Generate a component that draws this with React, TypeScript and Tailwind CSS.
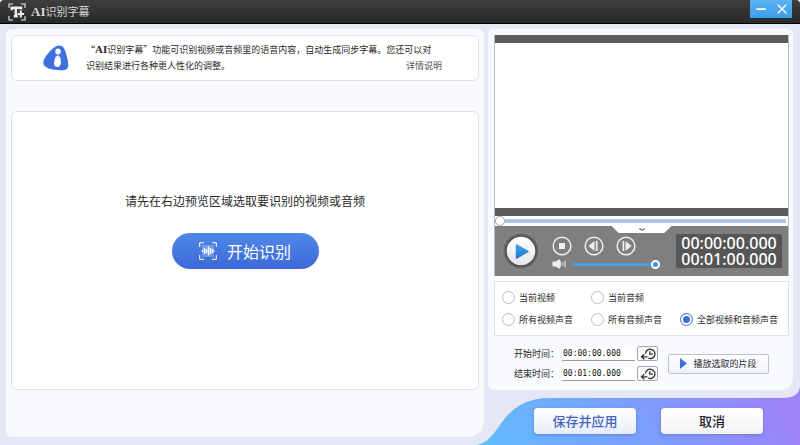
import React, { useState } from 'react';
import { ChevronDown, Minus, X } from 'lucide-react';

const sources = [
  { id: 'current-video', label: '当前视频' },
  { id: 'current-audio', label: '当前音频' },
  { id: 'all-video', label: '所有视频声音' },
  { id: 'all-audio', label: '所有音频声音' },
  { id: 'everything', label: '全部视频和音频声音' },
];

const LogoIcon = () => (
  <svg viewBox="0 0 18 18" className="h-[18px] w-[18px]" fill="none" stroke="#ececec" aria-hidden="true">
    <path d="M1 5V1h4M13 1h4v4M17 13v4h-4M5 17H1v-4" strokeWidth="1.1" />
    <path d="M3.800 7.200V4.800h9.200v1.600M7.800 4.500v9M5.800 13.300h4" strokeWidth="2.500" />
    <path d="M12.800 7.600v7M9.800 11h6.200" stroke="#333" strokeWidth="4" />
    <path d="M12.800 7.600v6.800M9.500 11h6.600" strokeWidth="2" />
  </svg>
);

const InfoIcon = () => (
  <svg viewBox="0 0 26 26" className="h-[26px] w-[26px] shrink-0" aria-hidden="true">
    <path d="M15.500.500C18.500.300 20.500 1.800 21.600 4.500C23.500 9 25.500 16.500 25.300 20.500C25.100 24 22.500 25.300 18.500 25.300C12.500 25.300 6.500 24.200 2.800 22C-.2 20-.3 16.500 1.500 13.500C4 9.300 10.500 1 15.500.500Z" fill="#3f71dc" />
    <ellipse cx="15" cy="6.500" rx="2.700" ry="3" fill="#fff" />
    <path d="M14.200 10.600C16.600 10.300 17.700 12.500 17.800 15.500C18 19 17.600 21.800 14.600 21.900C11.300 22 10.700 19.800 11.300 16.600C11.900 13.500 12.300 10.900 14.200 10.600Z" fill="#fff" />
  </svg>
);

const WaveIcon = () => (
  <svg viewBox="0 0 18 18" className="h-[18px] w-[18px]" fill="none" stroke="#fff" aria-hidden="true">
    <path d="M.7 5V.7H5M13 .7h4.300V5M17.300 13v4.300H13M5 17.300H.7V13" strokeWidth="1" />
    <rect x="3" y="3" width="12" height="12" fill="#fff" fillOpacity=".25" stroke="none" />
    <path d="M3.500 8v2M5.500 6v6M7.500 7v4M9.500 4.500v9M11.500 6v6M13.500 7v4M15 8.500v1" strokeWidth="1.400" />
  </svg>
);

const SpeakerIcon = () => (
  <svg viewBox="0 0 16 12" className="h-3 w-4 shrink-0" aria-hidden="true">
    <path d="M.5 3.500h3L8 1v10L3.500 8.500h-3Z" fill="#ececec" />
    <path d="M9.500 5.500L14 2v8L9.500 6.500Z" fill="#b5b5b5" />
    <path d="M8.500 3v6" stroke="#ececec" />
  </svg>
);

const ResetIcon = () => (
  <svg viewBox="0 0 16 12" className="h-3 w-4" fill="none" stroke="#333" strokeWidth="1.300" aria-hidden="true">
    <path d="M5.500 5.500A4.700 4.700 0 1 1 8.300 10.200" />
    <path d="M9.800 3.200v3h3" />
    <path d="M7.500 8.800H2M4.300 6.300L1.500 8.800l2.800 2.500" />
  </svg>
);

type RoundButtonProps = { label: string; children: React.ReactNode };

const RoundButton = ({ label, children }: RoundButtonProps) => (
  <button aria-label={label} className="h-5 w-5 text-[#f0f0f0] hover:text-white">
    <svg viewBox="0 0 20 20" fill="currentColor" aria-hidden="true">
      <circle cx="10" cy="10" r="8.800" fill="none" stroke="currentColor" strokeWidth="1.500" />
      {children}
    </svg>
  </button>
);

const TitleBar = () => (
  <header className="flex h-6 items-start justify-between rounded-t-sm border-b border-black bg-linear-to-b from-[#3e3e3e] to-[#292929] pr-2 pl-2">
    <div className="flex items-center gap-[5px] pt-[3px]">
      <LogoIcon />
      <h1 className="font-['Liberation_Serif','Noto_Sans_CJK_SC',serif] text-[13px] leading-4 font-bold text-[#d8d8d8]">
        AI<span className="text-[11px] font-normal">识别字幕</span>
      </h1>
    </div>
    <div className="flex h-[18px] items-center bg-linear-to-b from-[#5ab2f2] to-[#3c9eea] text-white">
      <button aria-label="最小化" className="flex h-full w-[21px] items-center justify-center">
        <Minus className="h-3.5 w-3.5" strokeWidth={3} />
      </button>
      <button aria-label="关闭" className="flex h-full w-[21px] items-center justify-center">
        <X className="h-4 w-4" />
      </button>
    </div>
  </header>
);

const Player = () => {
  const [position, setPosition] = useState(0);
  const [volume, setVolume] = useState(100);

  return (
    <section aria-label="预览" className="border-x border-[#b9bbc0] bg-white">
      <div className="h-[181px] border-y-8 border-[#5c5c5c] bg-white" />
      <div className="flex h-[10px] items-center pr-0.5">
        <input
          type="range"
          aria-label="播放进度"
          value={position}
          onChange={(e) => setPosition(Number(e.target.value))}
          className="h-1 w-full appearance-none bg-[#afc4e3] [&::-webkit-slider-thumb]:h-[10px] [&::-webkit-slider-thumb]:w-[10px] [&::-webkit-slider-thumb]:appearance-none [&::-webkit-slider-thumb]:rounded-full [&::-webkit-slider-thumb]:border [&::-webkit-slider-thumb]:border-[#a8a8a8] [&::-webkit-slider-thumb]:bg-white"
        />
      </div>
      <div className="relative flex h-[50px] items-center gap-3 bg-[#7f7f7f] pr-1.5 pl-[7px]">
        <button aria-label="展开" className="absolute top-0 left-1/2 h-[7px] w-[60px] -translate-x-1/2 bg-white text-[#666] [clip-path:polygon(0_0,100%_0,88%_100%,12%_100%)]">
          <ChevronDown className="mx-auto h-[7px] w-2.5" strokeWidth={3} preserveAspectRatio="none" />
        </button>
        <button aria-label="播放" className="h-[38px] w-[38px] shrink-0">
          <svg viewBox="0 0 38 38" aria-hidden="true">
            <defs>
              <linearGradient id="play-face" x1="0" y1="0" x2="0" y2="1">
                <stop offset="0" stopColor="#fff" />
                <stop offset="1" stopColor="#e3e5e8" />
              </linearGradient>
              <linearGradient id="play-arrow" x1="0" y1="0" x2="0" y2="1">
                <stop offset="0" stopColor="#3fa3ea" />
                <stop offset="1" stopColor="#1f78cf" />
              </linearGradient>
            </defs>
            <circle cx="19" cy="19" r="18.300" fill="#686868" stroke="#8e8e8e" />
            <circle cx="19" cy="19" r="15.800" fill="#4f4f4f" />
            <circle cx="19" cy="19" r="14.300" fill="url(#play-face)" />
            <path d="M14.500 13v13L26 19.500Z" fill="url(#play-arrow)" stroke="url(#play-arrow)" strokeWidth="1.500" strokeLinejoin="round" />
          </svg>
        </button>
        <div className="flex min-w-0 flex-1 flex-col gap-0.5 pt-1">
          <div className="flex gap-3">
            <RoundButton label="停止">
              <rect x="7" y="7" width="6" height="6" />
            </RoundButton>
            <RoundButton label="上一帧">
              <path d="M4.500 10L10.500 5v10ZM11.800 5h1.700v10h-1.700Z" />
            </RoundButton>
            <RoundButton label="下一帧">
              <path d="M15.500 10L9.500 5v10ZM6.500 5h1.700v10H6.500Z" />
            </RoundButton>
          </div>
          <div className="flex items-center gap-1">
            <SpeakerIcon />
            <input
              type="range"
              aria-label="音量"
              value={volume}
              onChange={(e) => setVolume(Number(e.target.value))}
              className="h-[3px] w-[88px] appearance-none rounded bg-[#4a9fe2] [&::-webkit-slider-thumb]:h-[9px] [&::-webkit-slider-thumb]:w-[9px] [&::-webkit-slider-thumb]:appearance-none [&::-webkit-slider-thumb]:rounded-full [&::-webkit-slider-thumb]:border-2 [&::-webkit-slider-thumb]:border-white [&::-webkit-slider-thumb]:bg-[#3a93e0]"
            />
          </div>
        </div>
        <div className="w-[106px] shrink-0 rounded-xs bg-[#565656] py-px text-center font-['Noto_Sans',sans-serif] text-[16px] leading-4 font-medium text-white">
          <p>00:00:00.000</p>
          <p>00:01:00.000</p>
        </div>
      </div>
    </section>
  );
};

const SourcePicker = () => {
  const [source, setSource] = useState('everything');

  return (
    <div role="radiogroup" aria-label="识别来源" className="mt-[5px] grid grid-cols-[89px_89px_1fr] gap-y-[9px] border border-[#dfe2ea] bg-white py-[9px] pl-[7px]">
      {sources.map(({ id, label }) => (
        <label key={id} className="flex items-center gap-1 leading-[13px] whitespace-nowrap nth-of-type-[3]:col-start-1">
          <input
            type="radio"
            name="source"
            checked={source === id}
            onChange={() => setSource(id)}
            className="h-[13px] w-[13px] shrink-0 appearance-none rounded-full border border-[#b9bcc4] bg-white checked:border-[#5b82dc] checked:bg-[#3d6fdb] checked:shadow-[inset_0_0_0_2px_white]"
          />
          {label}
        </label>
      ))}
    </div>
  );
};

type TimeFieldProps = { id: string; label: string; initial: string };

const TimeField = ({ id, label, initial }: TimeFieldProps) => {
  const [value, setValue] = useState(initial);

  return (
    <div className="flex items-center">
      <label htmlFor={id} className="w-12 whitespace-nowrap">
        {label}
      </label>
      <input
        id={id}
        value={value}
        onChange={(e) => setValue(e.target.value)}
        className="h-[14px] w-[73px] border-b border-[#9a9ca2] bg-white pl-px font-['DejaVu_Sans_Mono',monospace] text-[8px] text-[#111]"
      />
      <button aria-label={`重置${label}`} onClick={() => setValue(initial)} className="ml-0.5 flex h-[15px] w-[21px] items-center justify-center rounded-xs border border-[#a6a8ad] bg-[#f7f7f7]">
        <ResetIcon />
      </button>
    </div>
  );
};

const App = () => {
  return (
    <div className="relative isolate flex min-h-screen flex-col rounded-t-sm bg-[#e5e8f4] font-['Noto_Sans_CJK_SC',sans-serif] text-[9px] text-[#2a2a2a]">
      <svg viewBox="0 0 330 60" preserveAspectRatio="none" className="absolute right-0 bottom-0 -z-10 h-[60px] w-[41%]" aria-hidden="true">
        <defs>
          <linearGradient id="footer-fill" x1="0" y1="0.500" x2="1" y2="0.400">
            <stop offset="0" stopColor="#62bafd" />
            <stop offset="0.500" stopColor="#7c9dfc" />
            <stop offset="1" stopColor="#9f80fb" />
          </linearGradient>
        </defs>
        <path d="M4 60C30 57 26 15 76 13H312Q330 13 330 0V60Z" fill="url(#footer-fill)" />
      </svg>
      <TitleBar />
      <main className="grid flex-1 grid-cols-[478fr_305fr] gap-1 pt-[5px] pr-[7px] pl-1.5">
        <div className="mb-2 flex flex-col rounded-md rounded-br-2xl bg-[#f8fafd] px-[5px] pt-1.5 pb-[47px]">
          <section className="flex items-center gap-[17px] rounded-md border border-[#dfe2e8] bg-white py-1.5 pr-9 pl-[31px]">
            <InfoIcon />
            <div className="flex-1 leading-4">
              <p>
                “<b className="font-['Liberation_Serif',serif] text-[11px] leading-none">AI</b>识别字幕”功能可识别视频或音频里的语音内容，自动生成同步字幕。您还可以对
              </p>
              <div className="flex justify-between">
                <p>识别结果进行各种更人性化的调整。</p>
                <a href="#details" className="text-[#555]">详情说明</a>
              </div>
            </div>
          </section>
          <section className="mt-[30px] flex flex-1 flex-col items-center rounded-md border border-[#dfe2e8] bg-white pt-[79px]">
            <p className="text-[12px] leading-5">请先在右边预览区域选取要识别的视频或音频</p>
            <button className="mt-[22px] flex h-9 w-[147px] items-center justify-center gap-2.5 rounded-full bg-linear-to-b from-[#4f88e8] to-[#3c69d9] text-[16px] text-white hover:brightness-105">
              <WaveIcon />
              开始识别
            </button>
          </section>
        </div>

        <div className="flex flex-col">
          <div className="flex-1 rounded-md rounded-br-xl bg-[#f8fafd] pt-1.5 pr-1 pb-2 pl-1.5">
            <Player />
            <SourcePicker />
            <div className="mt-2.5 flex items-center gap-2.5 pl-5">
              <div className="flex flex-col gap-[5px]">
                <TimeField id="start-time" label="开始时间：" initial="00:00:00.000" />
                <TimeField id="end-time" label="结束时间：" initial="00:01:00.000" />
              </div>
              <button className="flex h-5 w-[101px] items-center justify-center gap-1.5 rounded-xs border border-[#bcc4d4] bg-linear-to-b from-white to-[#eef1f6] whitespace-nowrap">
                <svg viewBox="0 0 7 11" className="h-[11px] w-[7px]" aria-hidden="true">
                  <path d="M0 0L7 5.500L0 11Z" fill="#3f6fdc" />
                </svg>
                播放选取的片段
              </button>
            </div>
          </div>
          <footer className="flex justify-end gap-[25px] pt-[18px] pr-[30px] pb-[11px] text-[13px] font-medium">
            <button className="h-[26px] w-[102px] rounded-sm bg-linear-to-b from-white to-[#e6edf9] text-[#4564c0] shadow-[0_1px_3px_#4a5fb080]">保存并应用</button>
            <button className="h-[26px] w-[102px] rounded-sm bg-linear-to-b from-white to-[#f3f3f6] text-[#222] shadow-[0_1px_3px_#4a5fb080]">取消</button>
          </footer>
        </div>
      </main>
    </div>
  );
};

export default App;
